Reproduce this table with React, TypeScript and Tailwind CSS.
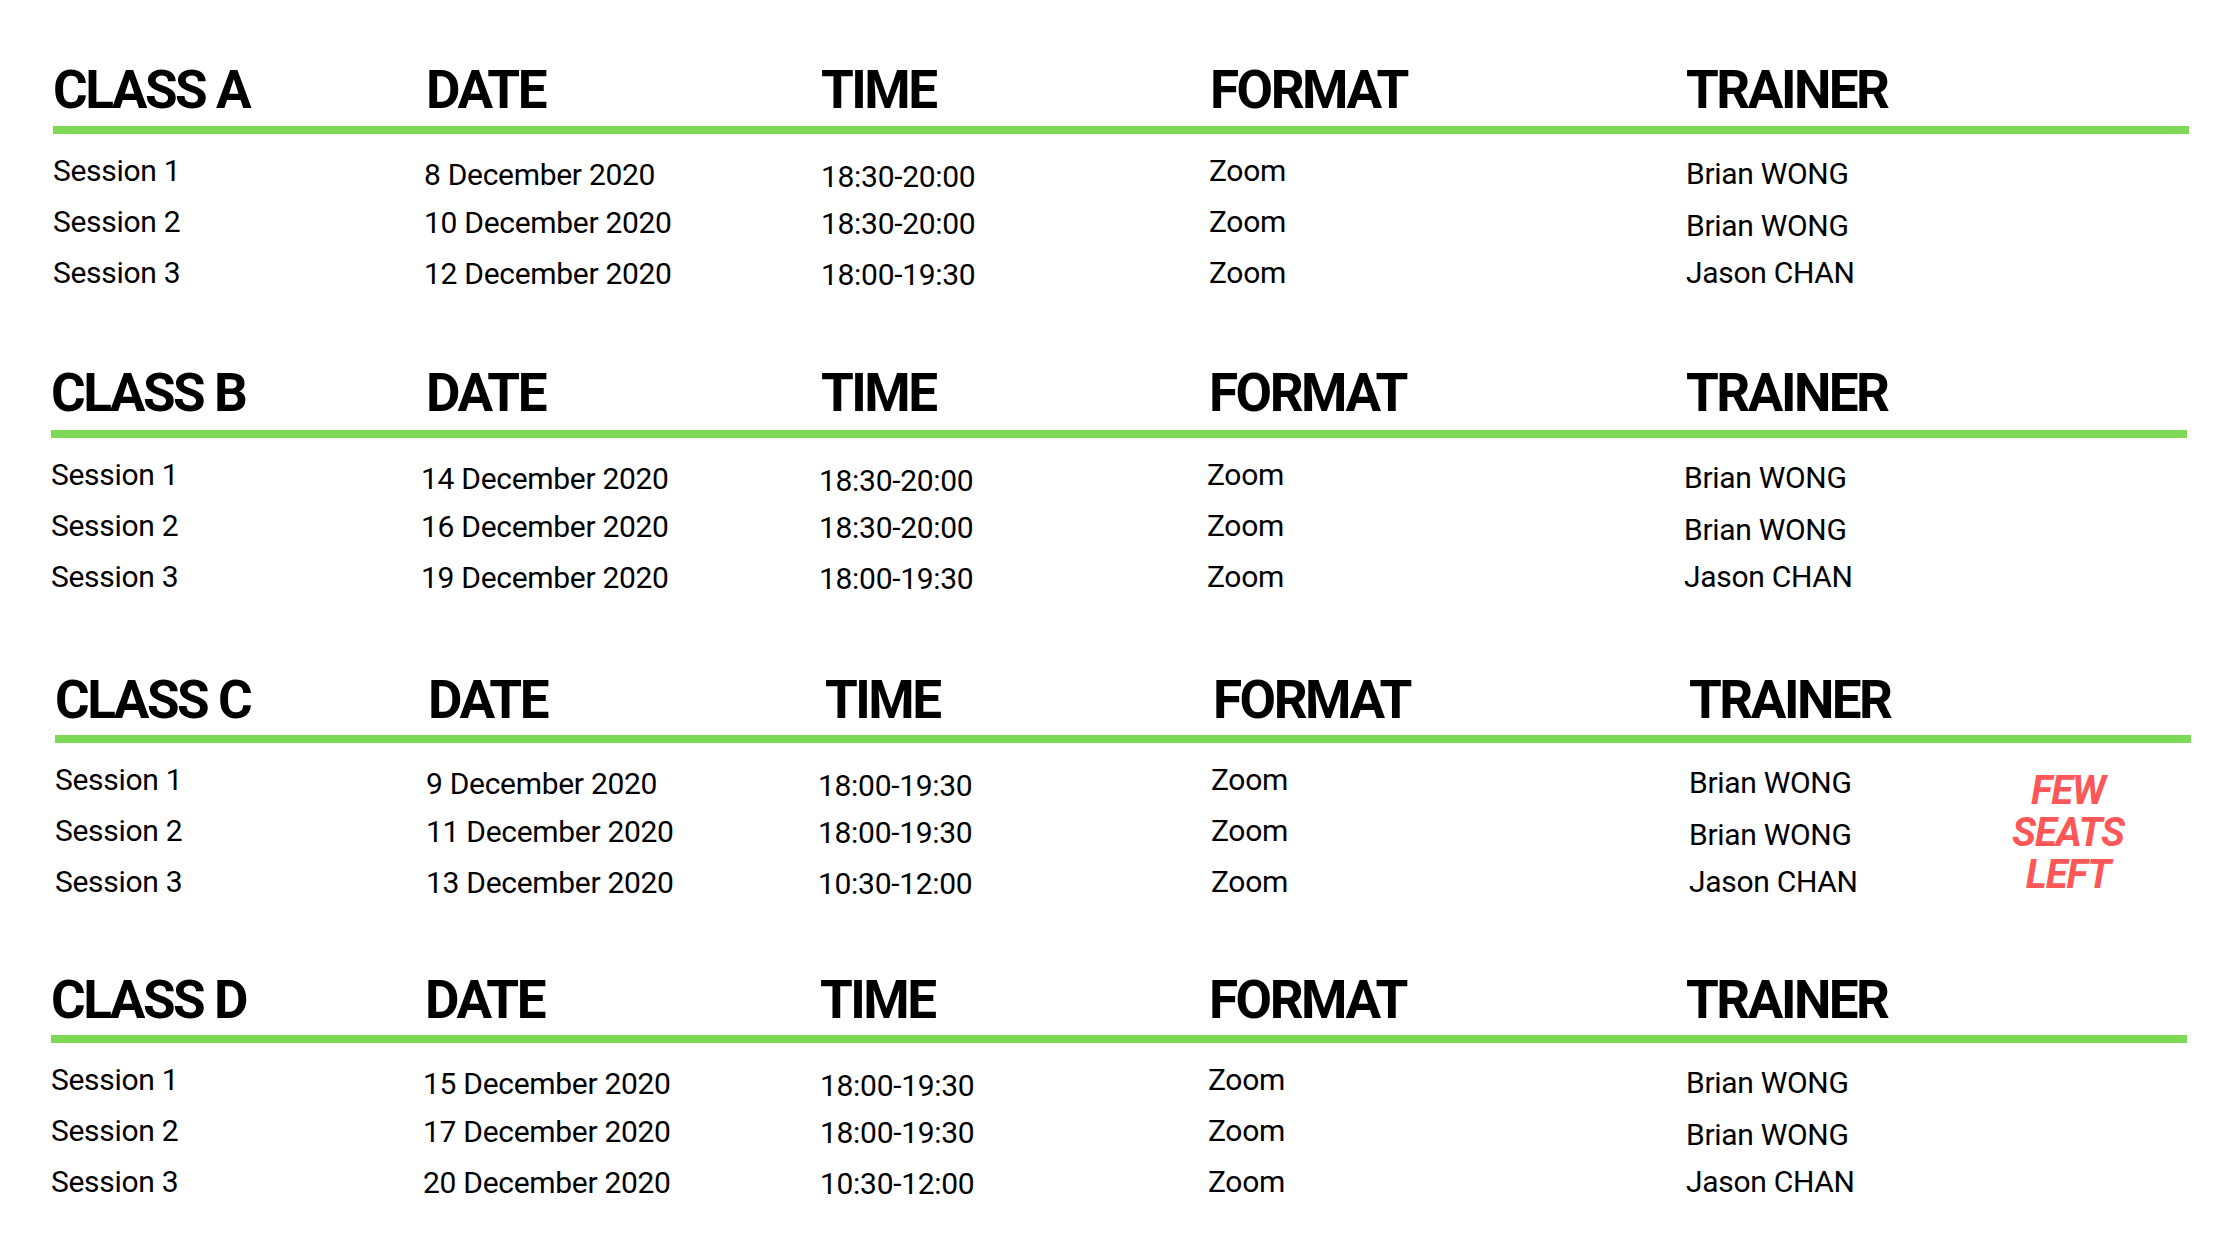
import React from "react";

type Section = {
  name: string;
  wrap: string;
  lineMt: string;
  head: string[];
  body: string[];
  rows: { session: string; date: string; time: string; format: string; trainer: string }[];
  badge?: boolean;
};

const sections: Section[] = [
  {
    name: "CLASS A",
    wrap: "ml-[53px]",
    lineMt: "mt-[9px]",
    head: ["w-[373px]", "w-[395px]", "w-[389px]", "w-[476px]"],
    body: ["w-[371px]", "w-[397px]", "w-[388px]", "w-[477px]"],
    rows: [
      { session: "Session 1", date: "8 December 2020", time: "18:30-20:00", format: "Zoom", trainer: "Brian WONG" },
      { session: "Session 2", date: "10 December 2020", time: "18:30-20:00", format: "Zoom", trainer: "Brian WONG" },
      { session: "Session 3", date: "12 December 2020", time: "18:00-19:30", format: "Zoom", trainer: "Jason CHAN" },
    ],
  },
  {
    name: "CLASS B",
    wrap: "ml-[51px] mt-[76px]",
    lineMt: "mt-[10px]",
    head: ["w-[375px]", "w-[395px]", "w-[388px]", "w-[477px]"],
    body: ["w-[370px]", "w-[398px]", "w-[388px]", "w-[477px]"],
    rows: [
      { session: "Session 1", date: "14 December 2020", time: "18:30-20:00", format: "Zoom", trainer: "Brian WONG" },
      { session: "Session 2", date: "16 December 2020", time: "18:30-20:00", format: "Zoom", trainer: "Brian WONG" },
      { session: "Session 3", date: "19 December 2020", time: "18:00-19:30", format: "Zoom", trainer: "Jason CHAN" },
    ],
  },
  {
    name: "CLASS C",
    wrap: "ml-[55px] mt-[79px]",
    lineMt: "mt-[8px]",
    head: ["w-[373px]", "w-[397px]", "w-[388px]", "w-[476px]"],
    body: ["w-[371px]", "w-[392px]", "w-[393px]", "w-[478px]"],
    badge: true,
    rows: [
      { session: "Session 1", date: "9 December 2020", time: "18:00-19:30", format: "Zoom", trainer: "Brian WONG" },
      { session: "Session 2", date: "11 December 2020", time: "18:00-19:30", format: "Zoom", trainer: "Brian WONG" },
      { session: "Session 3", date: "13 December 2020", time: "10:30-12:00", format: "Zoom", trainer: "Jason CHAN" },
    ],
  },
  {
    name: "CLASS D",
    wrap: "ml-[51px] mt-[74px]",
    lineMt: "mt-[8px]",
    head: ["w-[374px]", "w-[395px]", "w-[389px]", "w-[477px]"],
    body: ["w-[372px]", "w-[397px]", "w-[388px]", "w-[478px]"],
    rows: [
      { session: "Session 1", date: "15 December 2020", time: "18:00-19:30", format: "Zoom", trainer: "Brian WONG" },
      { session: "Session 2", date: "17 December 2020", time: "18:00-19:30", format: "Zoom", trainer: "Brian WONG" },
      { session: "Session 3", date: "20 December 2020", time: "10:30-12:00", format: "Zoom", trainer: "Jason CHAN" },
    ],
  },
];

const sessionMt = ["mt-[22px]", "mt-[21px]", "mt-[21px]"];
const dateMt = ["mt-[26px]", "mt-[18px]", "mt-[21px]"];
const timeMt = ["mt-[28px]", "mt-[17px]", "mt-[21px]"];
const trainerMt = ["mt-[25px]", "mt-[22px]", "mt-[17px]"];

function Column({ items, mts, width }: { items: string[]; mts: string[]; width: string }) {
  return (
    <div className={`flex flex-col shrink-0 ${width}`}>
      {items.map((t, i) => (
        <div key={i} className={`h-[30px] whitespace-nowrap text-[30px] leading-[30px] tracking-[-0.3px] ${mts[i]}`}>
          {t}
        </div>
      ))}
    </div>
  );
}

function Block({ s }: { s: Section }) {
  const headers = [s.name, "DATE", "TIME", "FORMAT", "TRAINER"];
  return (
    <section className={`flex flex-col ${s.wrap}`}>
      <div className="flex h-[54px] text-[53px] leading-[54px] font-bold tracking-[-2.5px]">
        {headers.map((h, i) => (
          <div key={h} className={`shrink-0 whitespace-nowrap ${s.head[i] ?? ""}`}>
            {h}
          </div>
        ))}
      </div>
      <div className={`h-[8px] w-[2136px] bg-[#7ed957] ${s.lineMt}`} />
      <div className="flex">
        <Column items={s.rows.map((r) => r.session)} mts={sessionMt} width={s.body[0]} />
        <Column items={s.rows.map((r) => r.date)} mts={dateMt} width={s.body[1]} />
        <Column items={s.rows.map((r) => r.time)} mts={timeMt} width={s.body[2]} />
        <Column items={s.rows.map((r) => r.format)} mts={sessionMt} width={s.body[3]} />
        <Column items={s.rows.map((r) => r.trainer)} mts={trainerMt} width="w-[300px]" />
        {s.badge && (
          <div className="mt-[27px] flex w-[158px] flex-col items-center text-[40px] font-bold italic tracking-[-1px] text-[#ff5757]">
            <span className="block h-[42px] leading-[42px]">FEW</span>
            <span className="block h-[42px] leading-[42px]">SEATS</span>
            <span className="block h-[42px] leading-[42px]">LEFT</span>
          </div>
        )}
      </div>
    </section>
  );
}

export default function App() {
  return (
    <div
      className="flex h-[1260px] w-[2240px] flex-col overflow-hidden bg-white pt-[63px] text-black"
      style={{ fontFamily: "Roboto, 'Liberation Sans', sans-serif" }}
    >
      {sections.map((s) => (
        <Block key={s.name} s={s} />
      ))}
    </div>
  );
}
